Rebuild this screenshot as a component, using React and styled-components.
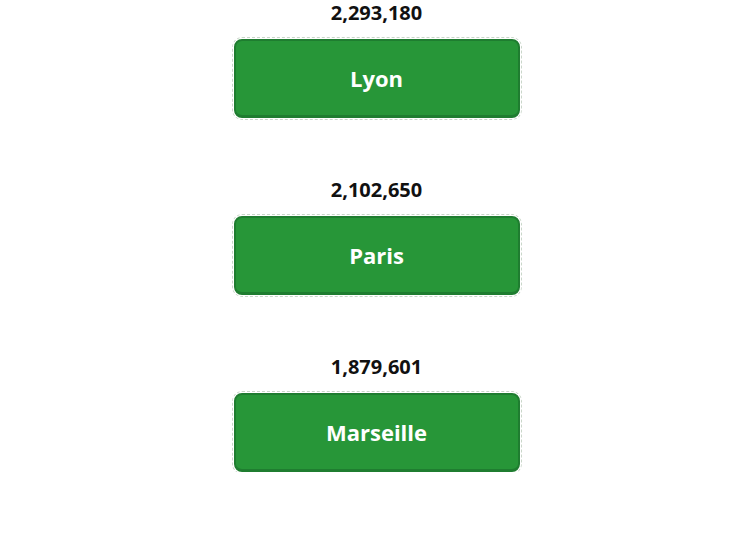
import styled, { createGlobalStyle } from "styled-components";

const GlobalStyle = createGlobalStyle`
  body {
    margin: 0;
    background: #ffffff;
    font-family: "Open Sans", "Noto Sans", sans-serif;
  }
`;

const List = styled.div`
  display: flex;
  flex-direction: column;
  align-items: center;
  gap: 59px;
  padding-left: 3px;
`;

const Item = styled.div`
  display: flex;
  flex-direction: column;
  align-items: center;
  gap: 13px;
`;

const Count = styled.div`
  font-size: 20px;
  font-weight: 700;
  line-height: 26px;
  color: #111111;
`;

const CityButton = styled.button`
  width: 286px;
  height: 79px;
  border: 2px solid #1f7d30;
  border-bottom-width: 3px;
  border-radius: 8px;
  background-color: #279638;
  color: #ffffff;
  font-family: inherit;
  font-size: 22px;
  font-weight: 700;
  outline: 1px dashed #c9d6c9;
  outline-offset: 1px;
  cursor: pointer;
`;

const cities = [
  { name: "Lyon", count: "2,293,180" },
  { name: "Paris", count: "2,102,650" },
  { name: "Marseille", count: "1,879,601" },
];

function App() {
  return (
    <>
      <GlobalStyle />
      <List>
        {cities.map((city) => (
          <Item key={city.name}>
            <Count>{city.count}</Count>
            <CityButton>{city.name}</CityButton>
          </Item>
        ))}
      </List>
    </>
  );
}

export default App;
